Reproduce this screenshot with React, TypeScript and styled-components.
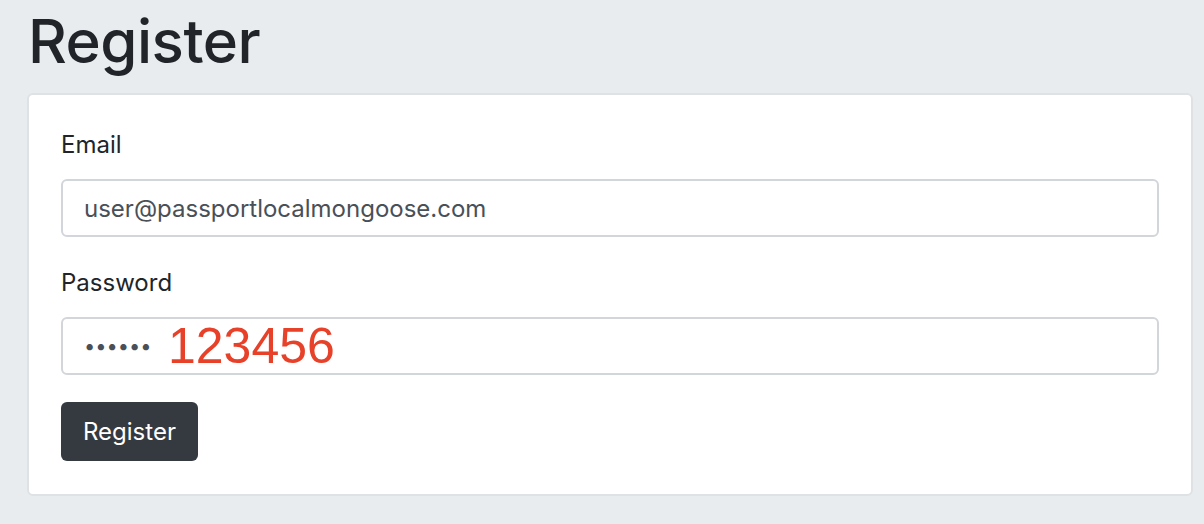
import styled, { createGlobalStyle } from "styled-components";

const GlobalStyle = createGlobalStyle`
  html, body {
    margin: 0;
    padding: 0;
    background-color: #e9ecef;
    font-family: Inter, "Noto Sans", "Liberation Sans", sans-serif;
    color: #212529;
  }
`;

const Page = styled.div`
  padding: 5px 11px 30px 27px;
  box-sizing: border-box;
  min-height: 524px;
`;

const Title = styled.h1`
  margin: 0 0 16px 0;
  padding-left: 1px;
  font-size: 60px;
  line-height: 72px;
  font-weight: 500;
  letter-spacing: -0.5px;
`;

const Card = styled.div`
  background-color: #ffffff;
  border: 2px solid #dfe2e5;
  border-radius: 6px;
  padding: 32px 32px 33px 32px;
`;

const Group = styled.div<{ spacing: number }>`
  margin-bottom: ${({ spacing }) => spacing}px;
`;

const Label = styled.label`
  display: block;
  font-size: 24px;
  line-height: 36px;
  margin-bottom: 16px;
`;

const InputWrapper = styled.div`
  position: relative;
`;

const Input = styled.input<{ masked?: boolean }>`
  display: block;
  width: 100%;
  box-sizing: border-box;
  height: 58px;
  padding: 0 21px;
  border: 2px solid #d2d6da;
  border-radius: 6px;
  font-family: Inter, "Noto Sans", "Liberation Sans", sans-serif;
  font-size: ${({ masked }) => (masked ? "20px" : "24px")};
  color: #495057;
  background-color: #ffffff;
  outline: none;
`;

const Annotation = styled.span`
  position: absolute;
  left: 107px;
  top: 0;
  height: 58px;
  display: flex;
  align-items: center;
  font-family: "Liberation Sans", Arial, sans-serif;
  font-size: 50px;
  color: #e8412a;
  pointer-events: none;
`;

const SubmitButton = styled.button`
  height: 59px;
  padding: 0 22px;
  border: none;
  border-radius: 6px;
  background-color: #343a40;
  color: #ffffff;
  font-family: Inter, "Noto Sans", "Liberation Sans", sans-serif;
  font-size: 24px;
  cursor: pointer;
`;

const App = () => {
  return (
    <>
      <GlobalStyle />
      <Page>
        <Title>Register</Title>
        <Card>
          <form onSubmit={(e) => e.preventDefault()}>
            <Group spacing={28}>
              <Label htmlFor="email">Email</Label>
              <Input
                id="email"
                type="email"
                defaultValue="user@passportlocalmongoose.com"
              />
            </Group>
            <Group spacing={27}>
              <Label htmlFor="password">Password</Label>
              <InputWrapper>
                <Input
                  id="password"
                  type="password"
                  masked
                  defaultValue="123456"
                />
                <Annotation>123456</Annotation>
              </InputWrapper>
            </Group>
            <SubmitButton type="submit">Register</SubmitButton>
          </form>
        </Card>
      </Page>
    </>
  );
};

export default App;
